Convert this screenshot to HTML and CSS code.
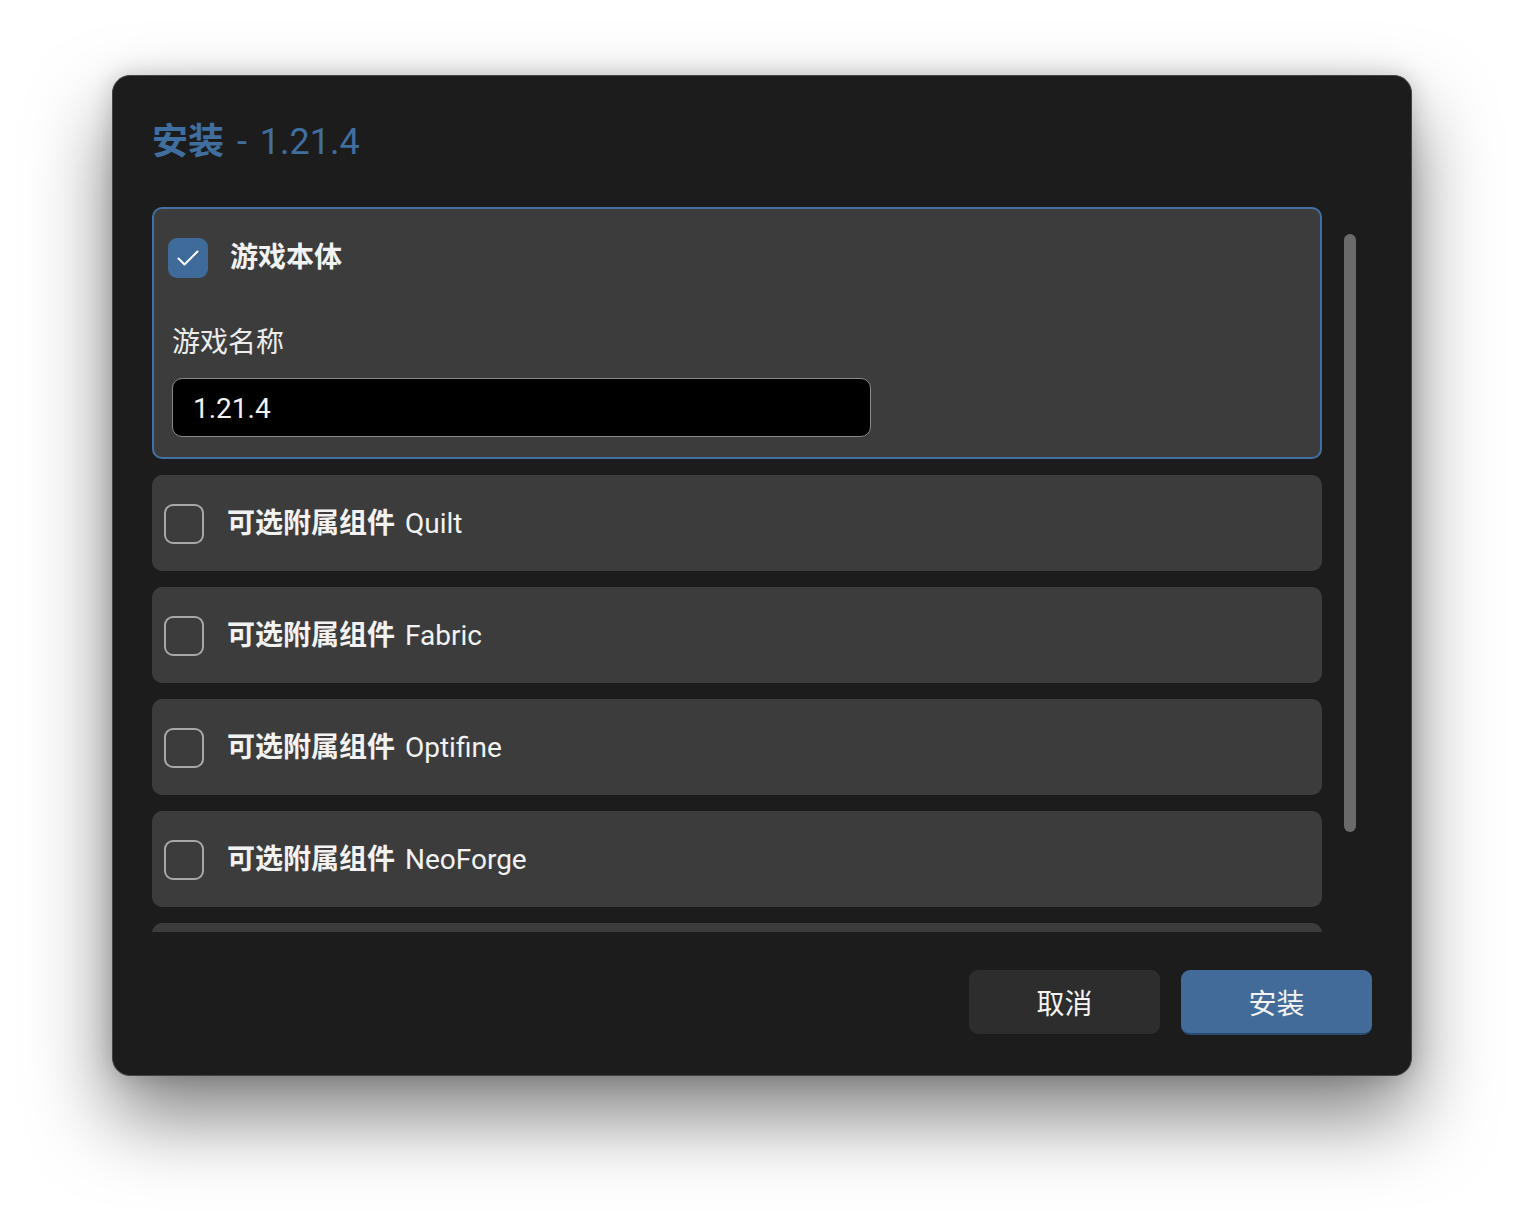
FILE: index.html
```html
<!DOCTYPE html>
<html lang="zh-CN">
<head>
  <meta charset="UTF-8">
  <meta name="viewport" content="width=device-width, initial-scale=1.0">
  <title>安装 - 1.21.4</title>
  <link rel="stylesheet" href="styles.css">
</head>
<body>
  <div class="dialog">
    <h1 class="title"><strong>安装</strong> - 1.21.4</h1>

    <div class="scroll-row">
      <div class="list">
        <div class="card card-main">
          <div class="card-head">
            <span class="check checked">
              <svg width="40" height="40" viewBox="0 0 40 40"><path d="M10.5 20.5 L16.5 26.5 L29.5 13.5" fill="none" stroke="#fff" stroke-width="2" stroke-linecap="round" stroke-linejoin="round"/></svg>
            </span>
            <span class="name"><b>游戏本体</b></span>
          </div>
          <div class="field">
            <label for="gameName">游戏名称</label>
            <input type="text" id="gameName" value="1.21.4">
          </div>
        </div>

        <div class="card">
          <span class="check"></span>
          <span class="name"><b>可选附属组件</b> Quilt</span>
        </div>
        <div class="card">
          <span class="check"></span>
          <span class="name"><b>可选附属组件</b> Fabric</span>
        </div>
        <div class="card">
          <span class="check"></span>
          <span class="name"><b>可选附属组件</b> Optifine</span>
        </div>
        <div class="card">
          <span class="check"></span>
          <span class="name"><b>可选附属组件</b> NeoForge</span>
        </div>
        <!-- next card, scrolled out of view -->
        <div class="card"></div>
      </div>
      <div class="track"><div class="thumb"></div></div>
    </div>

    <div class="actions">
      <button class="btn btn-cancel">取消</button>
      <button class="btn btn-primary">安装</button>
    </div>
  </div>
</body>
</html>
```

FILE: styles.css
```css
html, body {
  height: 100%;
}
body {
  box-sizing: border-box;
  min-height: 1224px;
  margin: 0;
  padding: 75px 0 0 112px;
  background-color: #ffffff;
  font-family: Roboto, "Noto Sans CJK SC", sans-serif;
  color: #f2f2f2;
}
.dialog {
  box-sizing: border-box;
  width: 1300px;
  height: 1001px;
  padding: 42px 39px 39px 39px;
  background-color: #1c1c1c;
  border: 1px solid #444;
  border-radius: 18px;
  box-shadow: 0 40px 80px rgba(0, 0, 0, 0.5), 0 0 24px rgba(0, 0, 0, 0.18);
}
.title {
  margin: 0 0 41px 0;
  height: 48px;
  line-height: 48px;
  font-size: 36px;
  font-weight: 400;
  word-spacing: 4px;
  color: #3f6e9f;
}
.title strong {
  font-weight: 700;
}
.scroll-row {
  display: flex;
  gap: 22px;
  height: 725px;
}
.list {
  width: 1170px;
  display: flex;
  flex-direction: column;
  gap: 16px;
  overflow: hidden;
}
.card {
  flex: none;
  box-sizing: border-box;
  height: 96px;
  display: flex;
  align-items: center;
  gap: 23px;
  padding: 2px 0 0 12px;
  background-color: #3c3c3c;
  border-radius: 10px;
}
.card-main {
  height: 252px;
  display: block;
  padding: 29px 14px 18px 14px;
  border: 2px solid #4171a4;
}
.card-head {
  display: flex;
  align-items: center;
  gap: 22px;
  height: 40px;
}
.check {
  flex: none;
  box-sizing: border-box;
  width: 40px;
  height: 40px;
  border: 2px solid #a8a8a8;
  border-radius: 9px;
}
.check.checked {
  border: none;
  background-color: #3f6b9a;
}
.check svg {
  display: block;
}
.name {
  font-size: 28px;
  line-height: 40px;
  word-spacing: 3px;
  color: #f2f2f2;
}
.name b {
  font-weight: 700;
}
.field {
  padding-left: 4px;
  margin-top: 45px;
}
.field label {
  display: block;
  font-size: 28px;
  line-height: 40px;
  color: #ececec;
}
.field input {
  box-sizing: border-box;
  display: block;
  margin-top: 15px;
  width: 699px;
  height: 59px;
  padding: 2px 20px 0 20px;
  background-color: #000;
  border: 1px solid #8a8a8a;
  border-radius: 10px;
  color: #f2f2f2;
  font-family: Roboto, "Noto Sans CJK SC", sans-serif;
  font-size: 28px;
  outline: none;
}
.track {
  width: 12px;
  padding-top: 27px;
}
.thumb {
  width: 12px;
  height: 598px;
  border-radius: 6px;
  background-color: #6a6a6a;
}
.actions {
  display: flex;
  justify-content: flex-end;
  gap: 21px;
  margin-top: 38px;
}
.btn {
  width: 191px;
  height: 65px;
  border: none;
  border-radius: 9px;
  font-family: Roboto, "Noto Sans CJK SC", sans-serif;
  font-size: 28px;
  color: #f4f4f4;
  cursor: pointer;
}
.btn-cancel {
  background-color: #2d2d2d;
  height: 64px;
}
.btn-primary {
  background-color: #426b99;
  border-bottom: 2px solid #2a4c72;
}
```
